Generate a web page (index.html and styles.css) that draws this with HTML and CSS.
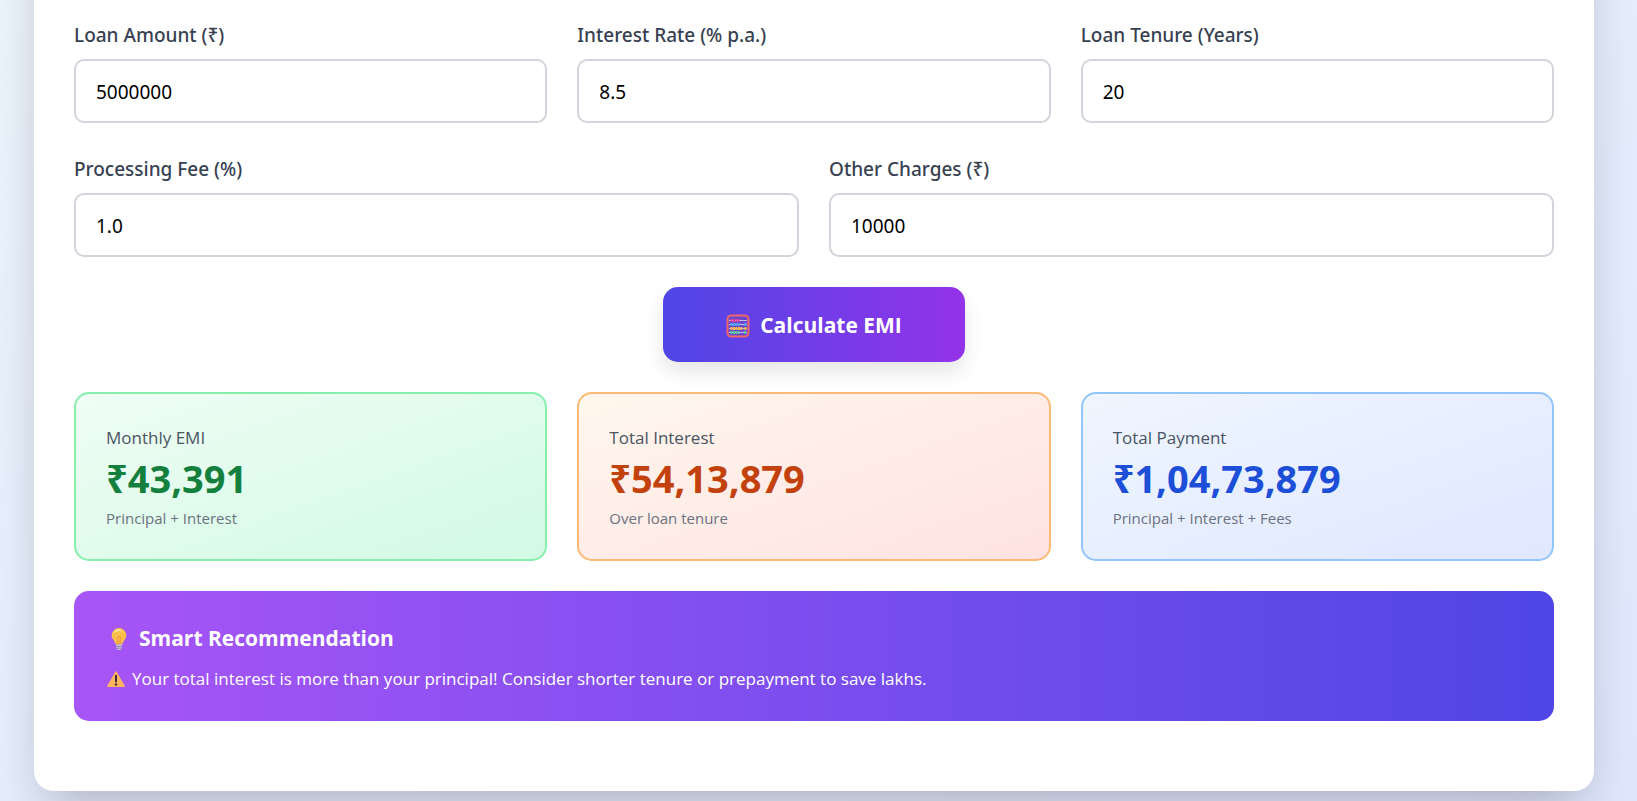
FILE: index.html
```html
<!DOCTYPE html>
<html lang="en">
<head>
  <meta charset="UTF-8">
  <meta name="viewport" content="width=device-width, initial-scale=1.0">
  <title>EMI Calculator</title>
  <link rel="stylesheet" href="styles.css">
</head>
<body>
  <main class="container">
    <form class="calculator" onsubmit="return false">
      <div class="input-grid three">
        <div class="input-group">
          <label for="loanAmount">Loan Amount (₹)</label>
          <input type="text" inputmode="decimal" id="loanAmount" value="5000000">
        </div>
        <div class="input-group">
          <label for="interestRate">Interest Rate (% p.a.)</label>
          <input type="text" inputmode="decimal" id="interestRate" value="8.5">
        </div>
        <div class="input-group">
          <label for="loanTenure">Loan Tenure (Years)</label>
          <input type="text" inputmode="decimal" id="loanTenure" value="20">
        </div>
      </div>

      <div class="input-grid two">
        <div class="input-group">
          <label for="processingFee">Processing Fee (%)</label>
          <input type="text" inputmode="decimal" id="processingFee" value="1.0">
        </div>
        <div class="input-group">
          <label for="otherCharges">Other Charges (₹)</label>
          <input type="text" inputmode="decimal" id="otherCharges" value="10000">
        </div>
      </div>

      <button type="submit" class="calc-button">
        <svg class="icon-abacus" viewBox="0 0 24 24" aria-hidden="true">
          <rect x="1.5" y="1.5" width="21" height="21" rx="3.5" fill="#6a48cc" stroke="#f0646c" stroke-width="2"/>
          <path d="M3 6.5h18M3 10.5h18M3 14.5h18M3 18.5h18" stroke="#c9b8ee" stroke-width="1"/>
          <g stroke-width="3" stroke-dasharray="2 .5">
            <path d="M4.5 6.5h9" stroke="#e0409a"/>
            <path d="M4.5 10.5h9M18 10.5h2.5" stroke="#4aa3f0"/>
            <path d="M4.5 14.5h12M18.5 14.5h2" stroke="#f7b84a"/>
            <path d="M4.5 18.5h9M18 18.5h2.5" stroke="#4fc99a"/>
          </g>
        </svg>
        Calculate EMI
      </button>
    </form>

    <section class="results">
      <div class="result-card green">
        <div class="result-label">Monthly EMI</div>
        <div class="result-value">₹43,391</div>
        <div class="result-note">Principal + Interest</div>
      </div>
      <div class="result-card orange">
        <div class="result-label">Total Interest</div>
        <div class="result-value">₹54,13,879</div>
        <div class="result-note">Over loan tenure</div>
      </div>
      <div class="result-card blue">
        <div class="result-label">Total Payment</div>
        <div class="result-value">₹1,04,73,879</div>
        <div class="result-note">Principal + Interest + Fees</div>
      </div>
    </section>

    <section class="recommendation">
      <h2>
        <svg class="icon-bulb" viewBox="0 0 24 24" aria-hidden="true">
          <path d="M12 1a7.3 7.3 0 0 0-7.3 7.3c0 4.2 3.5 5.7 4.1 9.2h6.4c.6-3.5 4.1-5 4.1-9.2A7.3 7.3 0 0 0 12 1z" fill="#fbbf4a"/>
          <path d="M12 2.2a5.8 5.8 0 0 0-5.5 4.5c1.5-2.4 6-3.4 8.8-1.800A5 5 0 0 0 12 2.2z" fill="#fff0a8"/>
          <path d="M10.8 17V12.5a1.7 1.7 0 1 1 2.4 0V17" fill="none" stroke="#f08c3a" stroke-width="1"/>
          <path d="M8.9 17.5h6.2l-.5 3.7c-.2 1-1 1.8-2.6 1.8s-2.4-.8-2.6-1.8z" fill="#c9bdd6"/>
          <path d="M9 19.5h6M9.3 21.3h5.4" stroke="#8d7ba6" stroke-width=".8"/>
        </svg>
        Smart Recommendation
      </h2>
      <p>
        <svg class="icon-warning" viewBox="0 0 20 20" aria-hidden="true">
          <path d="M10 3.2 18 17.2H2z" fill="#fdb45c" stroke="#fdb45c" stroke-width="1.6" stroke-linejoin="round"/>
          <path d="M10 6.8v5.7" stroke="#3f2a3c" stroke-width="2" stroke-linecap="round"/>
          <circle cx="10" cy="15.5" r="1.2" fill="#3f2a3c"/>
        </svg>
        Your total interest is more than your principal! Consider shorter tenure or prepayment to save lakhs.
      </p>
    </section>
  </main>
</body>
</html>
```
FILE: styles.css
```css
* {
  box-sizing: border-box;
  margin: 0;
  padding: 0;
}

body {
  font-family: "Open Sans", "Noto Sans", sans-serif;
  font-size: 17px;
  line-height: 28px;
  min-height: 100vh;
  padding: 0 43px 10px 34px;
  background: linear-gradient(to bottom right, #ebf3fc, #e0e7fd);
  overflow: hidden;
}

/* the card starts above the fold */
.container {
  display: flex;
  flex-direction: column;
  gap: 30px;
  margin-top: -80px;
  padding: 99px 40px 70px;
  background: #fff;
  border-radius: 20px;
  box-shadow: 0 25px 50px -12px rgba(0, 0, 0, 0.25);
}

.calculator {
  display: flex;
  flex-direction: column;
  gap: 30px;
}

.input-grid,
.results {
  display: grid;
  gap: 30px;
}

.three,
.results {
  grid-template-columns: repeat(3, 1fr);
}

.two {
  grid-template-columns: repeat(2, 1fr);
}

.input-group {
  display: flex;
  flex-direction: column;
  gap: 8px;
}

.input-group label {
  font-family: "Noto Sans", "Open Sans", sans-serif;
  font-size: 19px;
  font-weight: 500;
  line-height: 32px;
  color: #374151;
}

.input-group input {
  width: 100%;
  height: 64px;
  padding: 2px 20px 0;
  border: 2px solid #d1d5db;
  border-radius: 10px;
  background: #fff;
  color: #000;
  font-family: "Noto Sans", "Open Sans", sans-serif;
  font-size: 19px;
}

.input-group input:focus {
  outline: none;
  border-color: #4f46e5;
}

.calc-button {
  display: flex;
  align-items: center;
  align-self: center;
  gap: 10px;
  padding: 21px 63px 19px;
  border: none;
  border-radius: 15px;
  background: linear-gradient(90deg, #4f46e5, #9333ea);
  box-shadow: 0 10px 20px rgba(0, 0, 0, 0.1);
  color: #fff;
  font-family: inherit;
  font-size: 21px;
  font-weight: 700;
  line-height: 35px;
  cursor: pointer;
}

.result-card {
  padding: 30px 30px 26px;
  border: 2px solid;
  border-radius: 15px;
}

.green {
  background: linear-gradient(to bottom right, #f0fdf4, #d1fae5);
  border-color: #86efac;
}

.orange {
  background: linear-gradient(to bottom right, #fff7ed, #fee2e2);
  border-color: #fdba74;
}

.blue {
  background: linear-gradient(to bottom right, #eff6ff, #e0e7ff);
  border-color: #93c5fd;
}

.result-label {
  color: #4b5563;
}

.result-value {
  font-size: 38px;
  font-weight: 700;
  line-height: 52px;
}

.green .result-value {
  color: #15803d;
}

.orange .result-value {
  color: #c2410c;
}

.blue .result-value {
  color: #1d4ed8;
}

.result-note {
  font-size: 15px;
  line-height: 29px;
  color: #6b7280;
}

.recommendation {
  padding: 30px 30px 28px;
  border-radius: 15px;
  background: linear-gradient(90deg, #a855f7, #4f46e5);
  color: #fff;
}

.recommendation h2 {
  display: flex;
  align-items: center;
  gap: 8px;
  margin-bottom: 9px;
  font-size: 21px;
  font-weight: 700;
  line-height: 35px;
}

.recommendation p {
  display: flex;
  align-items: center;
  gap: 6px;
  padding-left: 2px;
}

.icon-abacus,
.icon-bulb {
  width: 24px;
  height: 24px;
  flex: none;
}

.icon-bulb {
  margin-left: 3px;
}

.icon-warning {
  width: 20px;
  height: 20px;
  flex: none;
}
```
